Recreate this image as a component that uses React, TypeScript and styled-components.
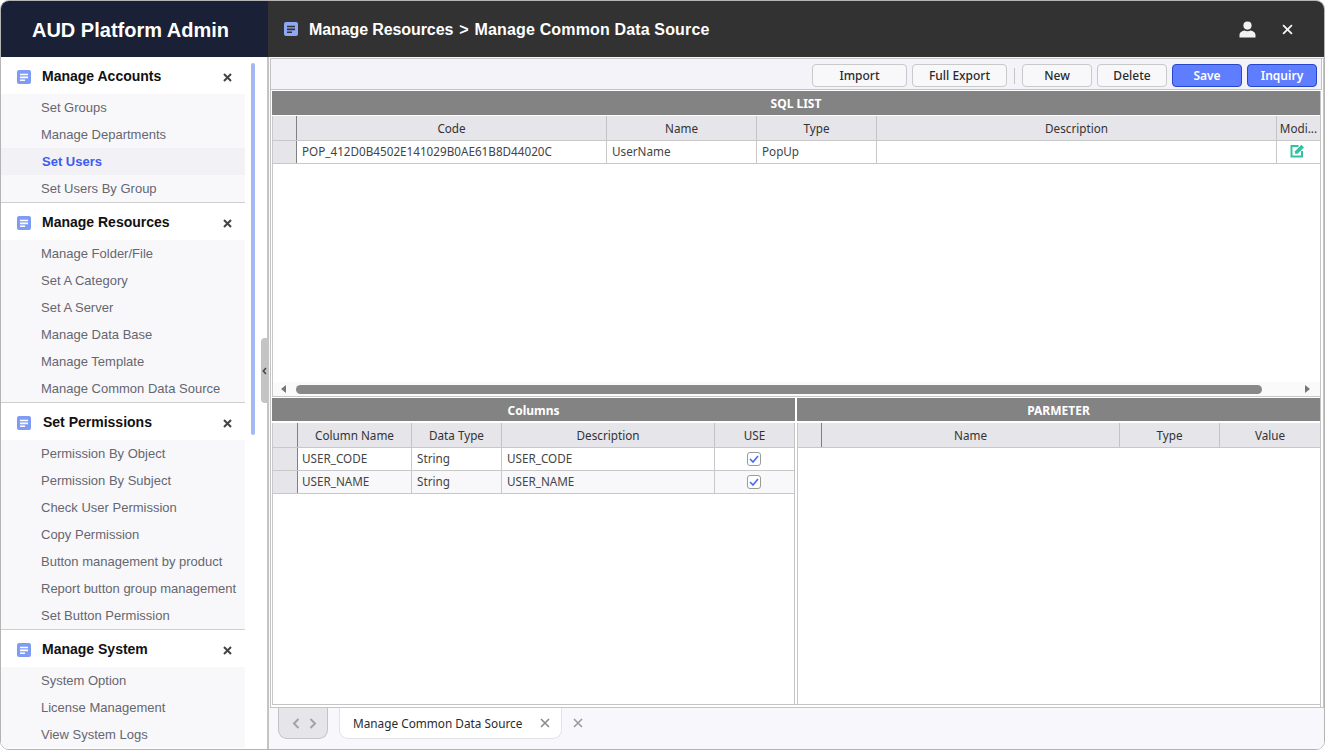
import React from "react";
import styled, { createGlobalStyle } from "styled-components";

const Global = createGlobalStyle`
  html, body { margin: 0; padding: 0; height: 100%; background: #fff; overflow: hidden; }
  * { box-sizing: border-box; }
  #root { height: 100%; }
`;

const Win = styled.div`
  width: 1325px; height: 750px; display: grid;
  grid-template-columns: 267px 1fr; grid-template-rows: 56px 1fr;
  border: 1px solid #b4b4b4; border-radius: 9px; overflow: hidden; background: #fff; position: relative;
  font-family: "Liberation Sans", Arial, sans-serif;
`;
const Brand = styled.div`
  background: #1a2035; color: #fff; font-size: 20px; font-weight: 700;
  display: flex; align-items: center; justify-content: center; padding: 2px 8px 0 0;
`;
const TopBar = styled.div`
  background: #323232; color: #fff; display: flex; align-items: center; padding: 0 31px 0 16px;
  font-size: 16px; font-weight: 700;
`;
const TopTitle = styled.div` margin: 2px 0 0 11px; flex: 1; display: flex; gap: 6px; white-space: nowrap; `;
const TitlePart = styled.span<{ $track?: number }>` letter-spacing: ${p => p.$track ?? 0}px; `;
const TopIcons = styled.div` display: flex; align-items: center; gap: 26px; `;
const Side = styled.aside`
  border-right: 1px solid #c4c4c4; position: relative; display: flex; overflow: hidden; background: #fff;
`;
const SideList = styled.div` width: 244px; flex: none; `;
const Thumb = styled.div`
  position: absolute; left: 250px; top: 6px; width: 4px; height: 372px; background: #a3b8f5; border-radius: 2px;
`;
const Handle = styled.div`
  position: absolute; left: 260px; top: 281px; width: 7px; height: 65px; background: #c4c4c4;
  border-radius: 4px 0 0 4px; display: flex; align-items: center; justify-content: center;
`;
const Section = styled.section` border-bottom: 1px solid #cfcfcf; &:last-child { border-bottom: 0; } `;
const SecHead = styled.div`
  height: 37px; display: flex; align-items: center; padding: 2px 12px 0 16px; font-size: 14px; font-weight: 700; color: #111;
`;
const SecTitle = styled.span<{ $pad?: number }>` margin-left: ${p => p.$pad ?? 11}px; flex: 1; margin-top: -1px; `;
const SecX = styled.svg` margin-right: 1px; margin-top: 2px; `;
const Item = styled.div<{ $active?: boolean }>`
  height: 27px; line-height: 27px; font-size: 13px; white-space: nowrap;
  background: ${p => (p.$active ? "#f2f2f6" : "#f8f8fb")};
  color: ${p => (p.$active ? "#3d5af1" : "#666670")};
  font-weight: ${p => (p.$active ? 700 : 400)};
  padding-left: ${p => (p.$active ? 41 : 40)}px;
`;
const Main = styled.main` display: flex; flex-direction: column; background: #f8f8fc; min-width: 0; border-left: 1px solid #c4c4c4; `;
const Panel = styled.div`
  height: 650px; flex: none; background: #fff; border: 1px solid #c4c4c4; margin: 1px 0 0 1px;
  display: flex; flex-direction: column;
  font-family: "Noto Sans", "Open Sans", sans-serif; font-size: 11.7px; color: #333;
`;
const Toolbar = styled.div`
  height: 31px; flex: none; display: flex; align-items: center; justify-content: flex-end; gap: 5px;
  padding: 3px 4px 0 0; background: #f3f3f9; margin-right: 1px;
  border-right: 1px solid #c4c4c4; border-bottom: 1px solid #c4c4c4;
`;
const Btn = styled.button<{ $w: number; $primary?: boolean }>`
  width: ${p => p.$w}px; height: 23px; border-radius: 4px; padding: 0;
  font-family: "Noto Sans", "Open Sans", sans-serif; font-size: 12px;
  font-weight: ${p => (p.$primary ? 600 : 500)};
  border: 1px solid ${p => (p.$primary ? "#2647c9" : "#c9c9c9")};
  background: ${p => (p.$primary ? "#5f7dff" : "#f8f8fb")};
  color: ${p => (p.$primary ? "#fff" : "#2b2b2b")};
`;
const Sep = styled.div` width: 1px; height: 16px; background: #c4c4c4; margin: 0 2px; `;
const Body = styled.div`
  flex: 1; min-height: 0; display: flex; flex-direction: column; margin: 1px 2px 0 1px; border-right: 1px solid #c4c4c4;
`;
const Upper = styled.div` flex: 1; min-height: 0; display: flex; flex-direction: column; `;
const Band = styled.div<{ $h: number }>`
  height: ${p => p.$h}px; background: #838383; color: #fff; font-weight: 700; font-size: 12px; text-align: center; line-height: 25px; flex: none;
`;
const TableWrap = styled.div<{ $gap: number; $edge?: boolean }>`
  border-left: 1px solid #c8c8c8; border-right: ${p => (p.$edge ? "1px solid #c4c4c4" : "0")};
  margin-top: ${p => p.$gap}px; display: flex; flex-direction: column; flex: 1; min-height: 0;
`;
const Row = styled.div<{ $cols: string; $alt?: boolean }>`
  display: grid; grid-template-columns: ${p => p.$cols}; height: 23px;
  background: ${p => (p.$alt ? "#f8f8fb" : "#fff")}; border-bottom: 1px solid #c8c8c8; flex: none;
`;
const HeadRow = styled(Row)` height: 25px; background: #e5e5ea; `;
const HCell = styled.div`
  text-align: center; line-height: 24px; border-right: 1px solid #c4c4c4; white-space: nowrap; overflow: hidden; color: #333;
  &:last-child { border-right: 0; }
`;
const RowHead = styled.div`
  background: #e5e5ea; border-right: 1px solid #808080;
`;
const Cell = styled.div<{ $pad?: number }>`
  padding-left: ${p => p.$pad ?? 5}px; line-height: 21px; border-right: 1px solid #c8c8c8; white-space: nowrap; overflow: hidden; color: #444;
  &:last-child { border-right: 0; }
`;
const IconCell = styled(Cell)`
  padding: 0 2px 0 0; display: flex; align-items: center; justify-content: center;
`;
const EditIcon = styled.svg` margin-top: -3px; margin-left: -1px; `;
const Grow = styled.div` flex: 1; `;
const HScroll = styled.div`
  height: 14px; display: flex; align-items: center; background: #fafafa; padding: 0 10px 0 8px; gap: 6px; flex: none;
`;
const HThumb = styled.div` height: 9px; width: 966px; background: #888; border-radius: 4.5px; margin-left: 3px; `;
const Lower = styled.div`
  height: 309px; flex: none; display: grid; grid-template-columns: 523px 1fr; gap: 2px;
  border-top: 1px solid #c8c8c8; border-bottom: 1px solid #c4c4c4; padding-top: 1px; background: #fff;
`;
const Half = styled.div` display: flex; flex-direction: column; min-width: 0; `;
const Check = styled.div`
  width: 14px; height: 14px; border: 1px solid #9a9a9a; border-radius: 3px; background: #fff;
  display: flex; align-items: center; justify-content: center;
`;
const BottomGap = styled.div` height: 2px; flex: none; `;
const TabBar = styled.div`
  flex: 1; display: flex; align-items: flex-start; padding-left: 9px; background: #f8f8fc; font-family: "Noto Sans", "Open Sans", sans-serif;
`;
const Nav = styled.div`
  width: 50px; height: 31px; background: #e5e5ea; border: 1px solid #c4c4c4; border-top: 0; border-radius: 0 0 9px 9px;
  display: flex; align-items: center; justify-content: center; gap: 9px; padding-left: 3px;
`;
const Tab = styled.div`
  width: 223px; height: 31px; margin-left: 11px; background: #fff; border: 1px solid #e2e2e8; border-top: 0; border-radius: 0 0 9px 9px;
  display: flex; align-items: center; padding: 0 11px 0 13px; font-size: 11.8px; color: #2b2b2b;
`;
const TabText = styled.span` flex: 1; white-space: nowrap; `;
const CloseAll = styled.div` margin-left: 11px; height: 30px; display: flex; align-items: center; `;

const DocIcon = ({ size = 14, color = "#7f9cf5", line = "#fff" }: { size?: number; color?: string; line?: string }) => (
  <svg width={size} height={size} viewBox="0 0 14 14" style={{ flex: "none" }}>
    <rect width="14" height="14" rx="2" fill={color} />
    <path d="M3 3.7h8v1.6H3zM3 6.6h8v1.6H3zM3 9.5h5v1.6H3z" fill={line} />
  </svg>
);
const X = ({ s, c, w }: { s: number; c: string; w: number }) => (
  <svg width={s} height={s} viewBox="0 0 10 10" style={{ flex: "none" }}>
    <path d="M1 1l8 8M9 1l-8 8" stroke={c} strokeWidth={w} fill="none" />
  </svg>
);
const Chev = ({ dir }: { dir: "l" | "r" }) => (
  <svg width="8" height="11" viewBox="0 0 8 11">
    <path d={dir === "l" ? "M6.5 1L2 5.5 6.5 10" : "M1.5 1L6 5.5 1.5 10"} stroke="#a2a2a8" strokeWidth="2" fill="none" />
  </svg>
);
const Tick = () => (
  <svg width="10" height="8" viewBox="0 0 10 8"><path d="M1 4l3 3 5-6" stroke="#4a6cf7" strokeWidth="1.7" fill="none" /></svg>
);

const menu = [
  { t: "Manage Accounts", pad: 11, items: ["Set Groups", "Manage Departments", "Set Users", "Set Users By Group"], active: "Set Users" },
  { t: "Manage Resources", pad: 11, items: ["Manage Folder/File", "Set A Category", "Set A Server", "Manage Data Base", "Manage Template", "Manage Common Data Source"] },
  { t: "Set Permissions", pad: 12, items: ["Permission By Object", "Permission By Subject", "Check User Permission", "Copy Permission", "Button management by product", "Report button group management", "Set Button Permission"] },
  { t: "Manage System", pad: 11, items: ["System Option", "License Management", "View System Logs"] },
];

const sqlCols = "24px 310px 150px 120px 400px 1fr";
const colCols = "25px 114px 90px 213px 1fr";
const parCols = "24px 298px 100px 1fr";

export default function App() {
  return (
    <>
      <Global />
      <Win>
        <Brand>AUD Platform Admin</Brand>
        <TopBar>
          <DocIcon color="#8fa8f5" line="#323232" />
          <TopTitle>
            <TitlePart $track={-0.1}>Manage Resources</TitlePart>
            <span>&gt;</span>
            <TitlePart $track={0.15}>Manage Common Data Source</TitlePart>
          </TopTitle>
          <TopIcons>
            <svg width="17" height="17" viewBox="0 0 17 17">
              <circle cx="8.5" cy="4.6" r="4.1" fill="#f2f2f2" />
              <path d="M0.5 16.5v-2.2C.5 11.5 3 10 5.4 9.6c1.8 1 4.4 1 6.2 0 2.4.4 4.9 1.9 4.9 4.7v2.2z" fill="#f2f2f2" />
            </svg>
            <X s={11} c="#f2f2f2" w={1.7} />
          </TopIcons>
        </TopBar>
        <Side>
          <SideList>
            {menu.map(m => (
              <Section key={m.t}>
                <SecHead>
                  <DocIcon />
                  <SecTitle $pad={m.pad}>{m.t}</SecTitle>
                  <SecX width="9" height="9" viewBox="0 0 9 9">
                    <path d="M1 1l7 7M8 1L1 8" stroke="#444" strokeWidth="2" fill="none" />
                  </SecX>
                </SecHead>
                {m.items.map(i => (
                  <Item key={i} $active={i === m.active}>{i}</Item>
                ))}
              </Section>
            ))}
          </SideList>
          <Thumb />
          <Handle>
            <svg width="5" height="8" viewBox="0 0 5 8"><path d="M4 1L1.3 4 4 7" stroke="#444" strokeWidth="1.5" fill="none" /></svg>
          </Handle>
        </Side>
        <Main>
          <Panel>
            <Toolbar>
              <Btn $w={95}>Import</Btn>
              <Btn $w={95}>Full Export</Btn>
              <Sep />
              <Btn $w={70}>New</Btn>
              <Btn $w={70}>Delete</Btn>
              <Btn $w={70} $primary>Save</Btn>
              <Btn $w={70} $primary>Inquiry</Btn>
            </Toolbar>
            <Body>
              <Upper>
                <Band $h={24}>SQL LIST</Band>
                <TableWrap $gap={1}>
                  <HeadRow $cols={sqlCols}>
                    <RowHead />
                    <HCell>Code</HCell><HCell>Name</HCell><HCell>Type</HCell><HCell>Description</HCell><HCell>Modi...</HCell>
                  </HeadRow>
                  <Row $cols={sqlCols}>
                    <RowHead />
                    <Cell>POP_412D0B4502E141029B0AE61B8D44020C</Cell>
                    <Cell>UserName</Cell>
                    <Cell>PopUp</Cell>
                    <Cell />
                    <IconCell>
                      <EditIcon width="15" height="14" viewBox="0 0 15 14">
                        <path d="M0.5 1h8v2H2.5v8.5H11V7h2v6.5H0.5z" fill="#2fc4a0" />
                        <path d="M5 7.2L11.4 0.8l2.6 2.6-6.4 6.4H5z" fill="#2fc4a0" />
                      </EditIcon>
                    </IconCell>
                  </Row>
                  <Grow />
                  <HScroll>
                    <svg width="6" height="8" viewBox="0 0 6 8"><path d="M5 0v8L0 4z" fill="#777" /></svg>
                    <HThumb />
                    <Grow />
                    <svg width="6" height="8" viewBox="0 0 6 8"><path d="M1 0v8l5-4z" fill="#777" /></svg>
                  </HScroll>
                </TableWrap>
              </Upper>
              <Lower>
                <Half>
                  <Band $h={23}>Columns</Band>
                  <TableWrap $gap={2} $edge>
                    <HeadRow $cols={colCols}>
                      <RowHead />
                      <HCell>Column Name</HCell><HCell>Data Type</HCell><HCell>Description</HCell><HCell>USE</HCell>
                    </HeadRow>
                    {["USER_CODE", "USER_NAME"].map((n, i) => (
                      <Row key={n} $cols={colCols} $alt={i === 1}>
                        <RowHead />
                        <Cell $pad={4}>{n}</Cell>
                        <Cell>String</Cell>
                        <Cell>{n}</Cell>
                        <IconCell><Check><Tick /></Check></IconCell>
                      </Row>
                    ))}
                  </TableWrap>
                </Half>
                <Half>
                  <Band $h={23}>PARMETER</Band>
                  <TableWrap $gap={2}>
                    <HeadRow $cols={parCols}>
                      <RowHead />
                      <HCell>Name</HCell><HCell>Type</HCell><HCell>Value</HCell>
                    </HeadRow>
                  </TableWrap>
                </Half>
              </Lower>
              <BottomGap />
            </Body>
          </Panel>
          <TabBar>
            <Nav><Chev dir="l" /><Chev dir="r" /></Nav>
            <Tab>
              <TabText>Manage Common Data Source</TabText>
              <X s={10} c="#8a8a8a" w={1.6} />
            </Tab>
            <CloseAll><X s={10} c="#9a9a9a" w={1.6} /></CloseAll>
          </TabBar>
        </Main>
      </Win>
    </>
  );
}
